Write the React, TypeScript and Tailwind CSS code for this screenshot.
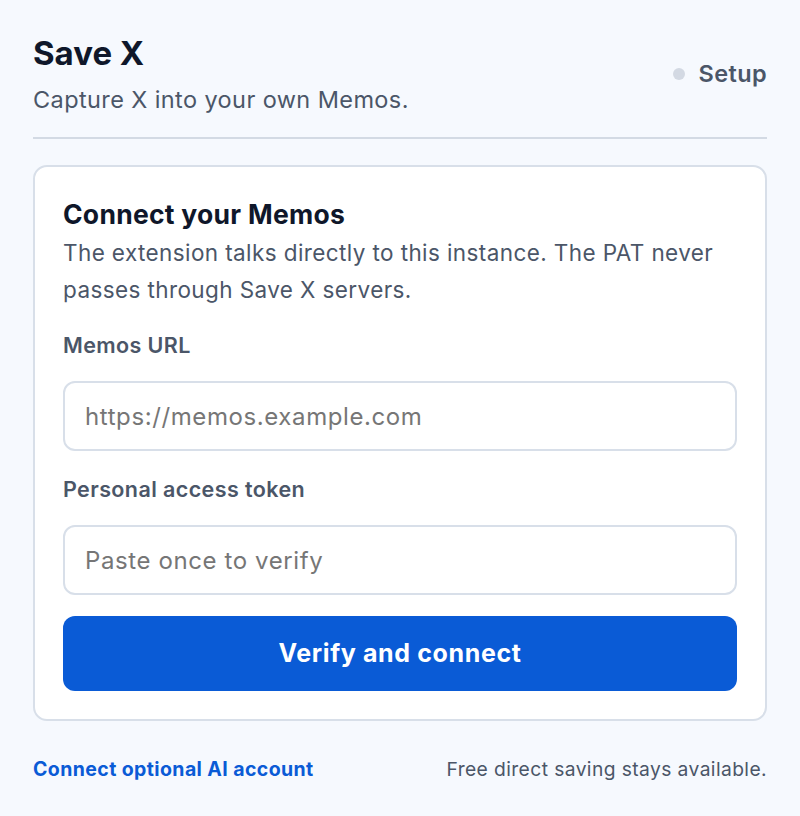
export default function App() {
  return (
    <div className="min-h-[816px] w-full bg-[#f6f9fe] px-[33px] pt-[33px] font-['Inter',sans-serif] tracking-[0.025em] text-[#0f172a]">
      {/* Header */}
      <header className="flex items-center justify-between border-b-2 border-[#d3dae4] pb-[22px]">
        <div>
          <h1 className="text-[33px] font-bold leading-[40px] tracking-normal">Save X</h1>
          <p className="mt-[12px] text-[23.5px] leading-[30px] text-[#4b5668]">Capture X into your own Memos.</p>
        </div>
        <div className="flex items-center gap-[13px]">
          <span className="h-[12px] w-[12px] rounded-full bg-[#d3d9e3]" />
          <span className="text-[23.5px] font-semibold text-[#4b5668]">Setup</span>
        </div>
      </header>

      {/* Connect card */}
      <section className="mt-[26px] rounded-[14px] border-2 border-[#d8dfe9] bg-white px-[28px] pb-[28px] pt-[29px]">
        <h2 className="text-[26.5px] font-bold leading-[36px] tracking-[0.01em]">Connect your Memos</h2>
        <p className="mt-[2px] text-[22.5px] leading-[37px] text-[#4b5668]">
          The extension talks directly to this instance. The PAT never passes through Save X servers.
        </p>

        <label className="mt-[24px] block text-[21.5px] font-semibold leading-[26px] text-[#4b5668]">Memos URL</label>
        <input
          type="text"
          placeholder="https://memos.example.com"
          className="mt-[23px] block h-[70px] w-full rounded-[12px] border-2 border-[#d8dfe9] bg-white px-[20px] text-[24px] tracking-[0.025em] outline-none placeholder:text-[#767676]"
        />

        <label className="mt-[25px] block text-[21.5px] font-semibold leading-[26px] text-[#4b5668]">Personal access token</label>
        <input
          type="password"
          placeholder="Paste once to verify"
          className="mt-[23px] block h-[70px] w-full rounded-[12px] border-2 border-[#d8dfe9] bg-white px-[20px] text-[24px] tracking-[0.025em] outline-none placeholder:text-[#767676]"
        />

        <button className="mt-[21px] block h-[75px] w-full rounded-[12px] bg-[#0a5bd6] text-[25px] font-bold tracking-[0.025em] text-white">
          Verify and connect
        </button>
      </section>

      {/* Footer */}
      <footer className="mt-[34px] flex items-center justify-between">
        <a href="#" className="text-[19.5px] font-bold text-[#0a5bd6]">Connect optional AI account</a>
        <span className="text-[19.25px] text-[#4b5668]">Free direct saving stays available.</span>
      </footer>
    </div>
  )
}
